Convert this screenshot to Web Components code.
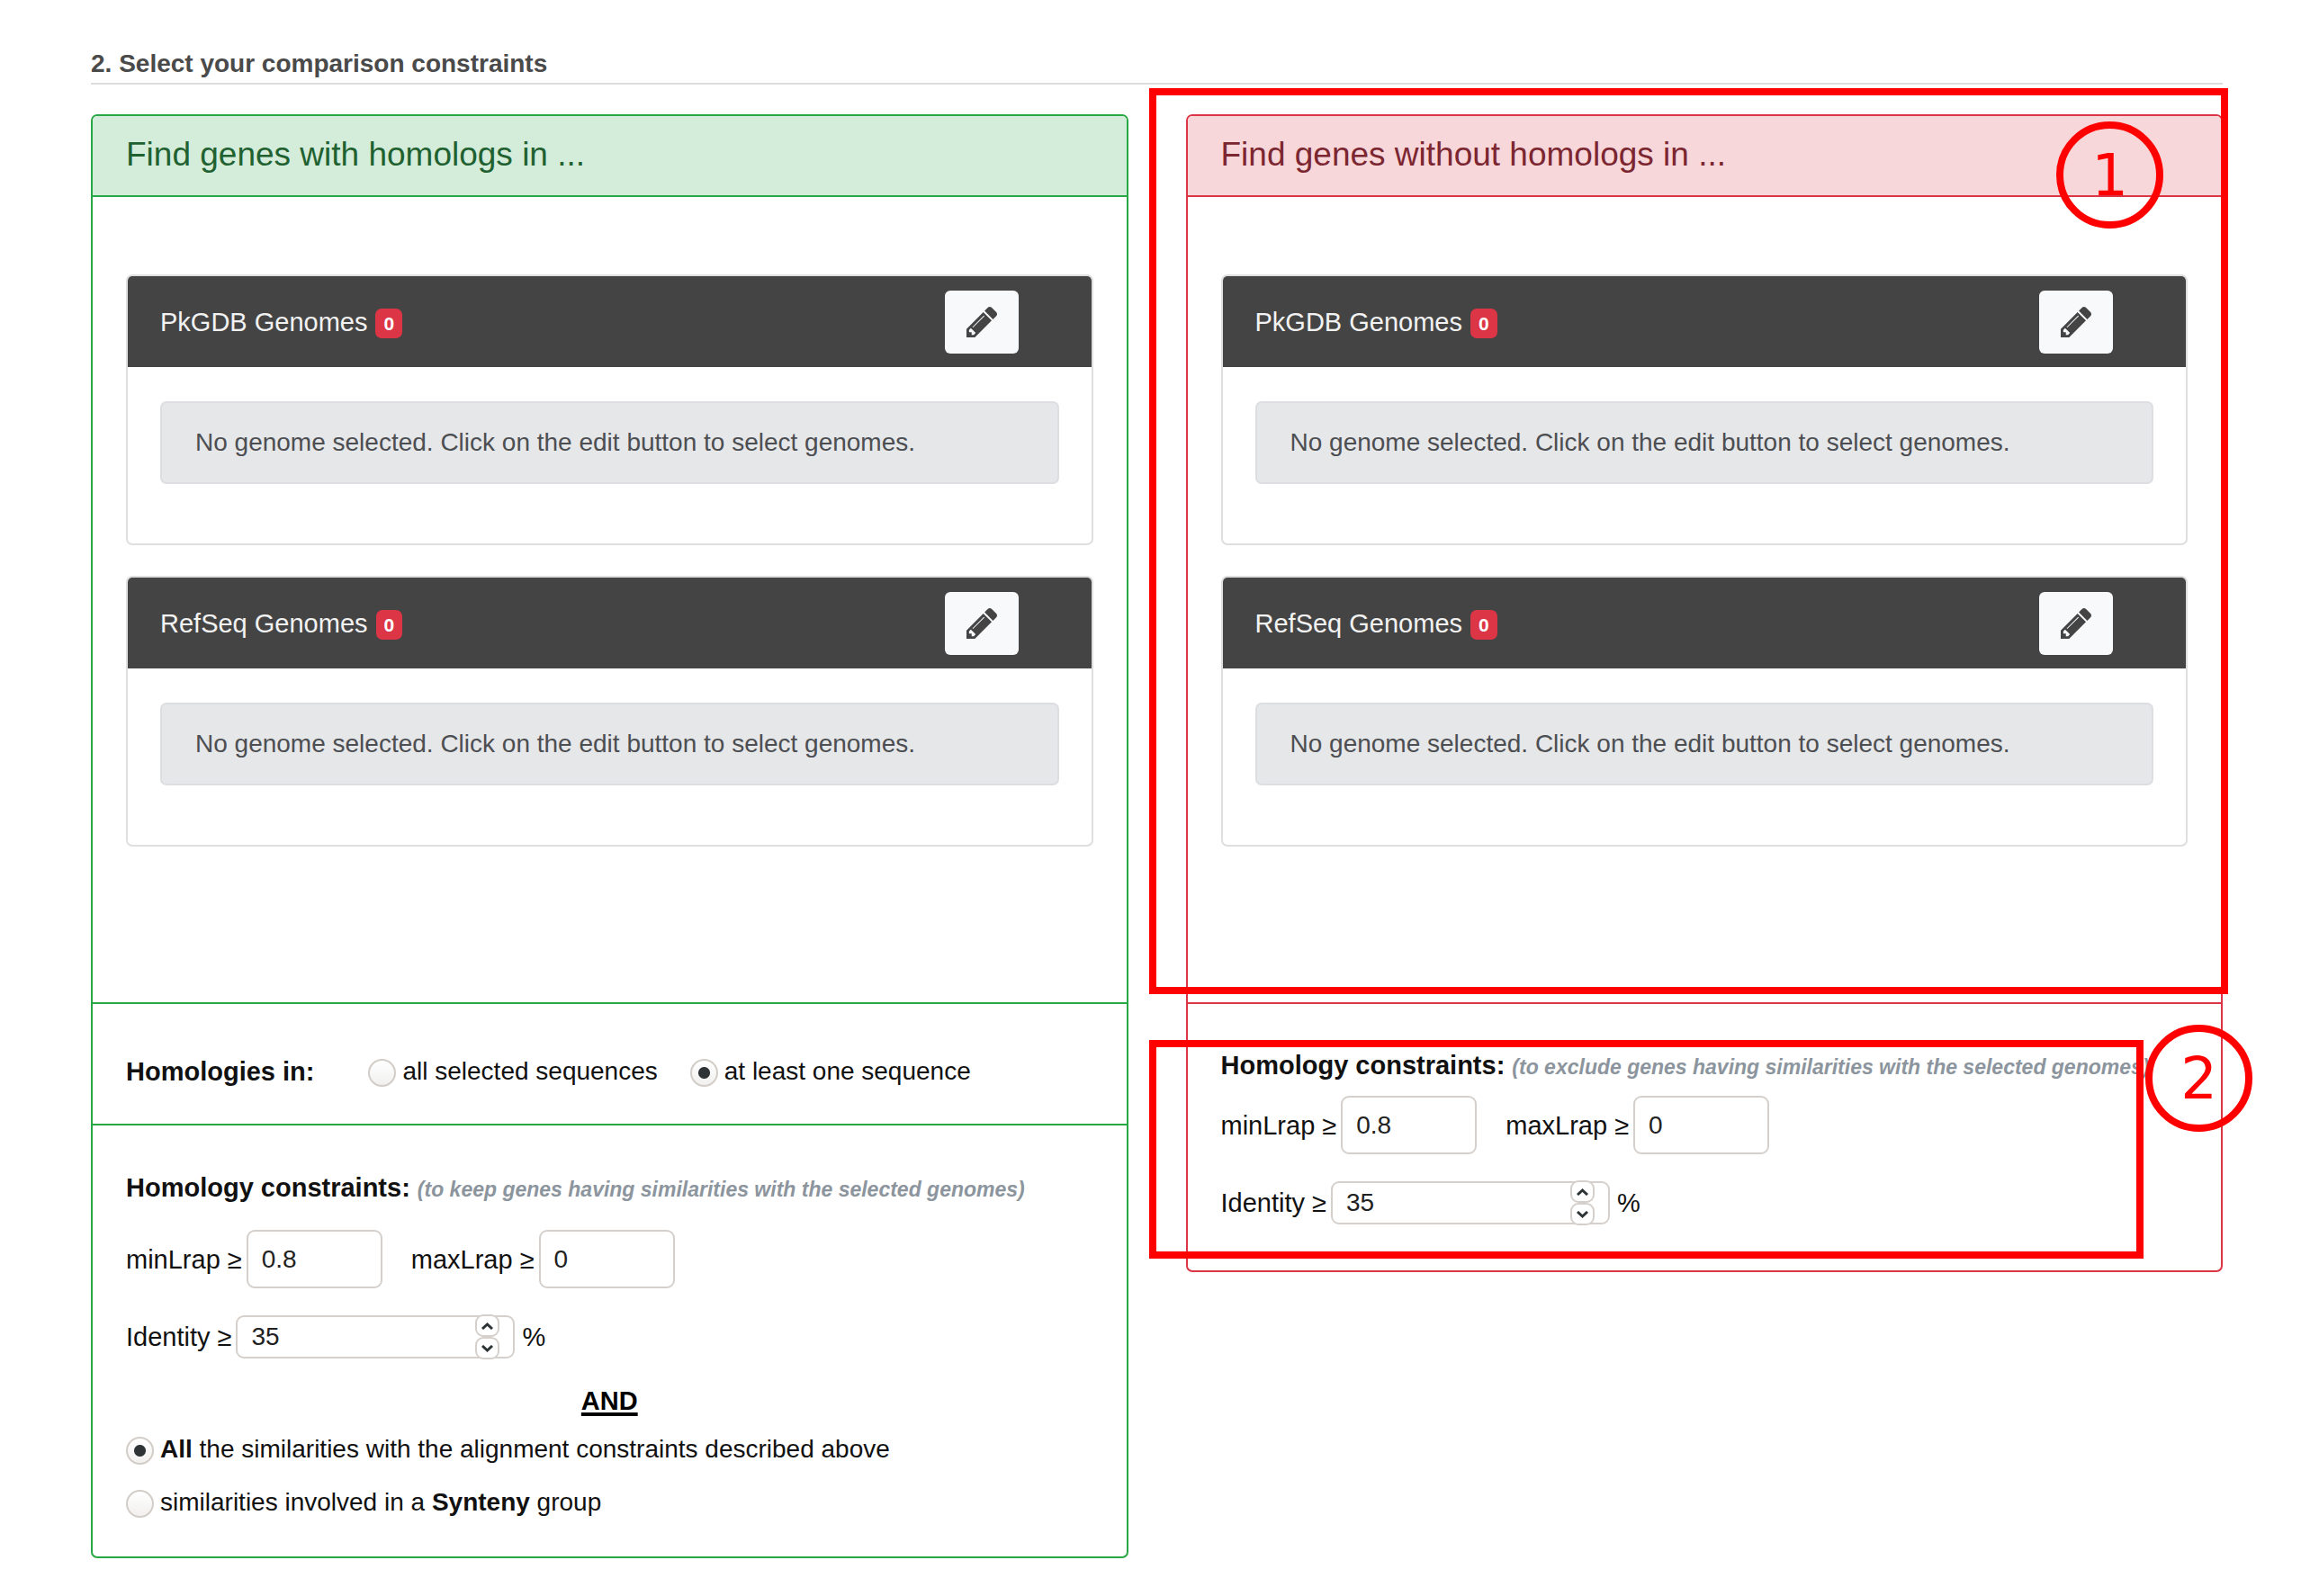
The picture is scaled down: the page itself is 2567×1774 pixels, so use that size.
<!DOCTYPE html>
<html lang="en">
<head>
<meta charset="utf-8">
<title>Comparison constraints</title>
<style>
  body { margin: 0; background: #fff; color: #111; font: 29px/40px "Liberation Sans", Arial, sans-serif; }
</style>
</head>
<body>
<comparison-page>
  <span slot="heading">2. Select your comparison constraints</span>

  <gene-panel tone="success">
    <span slot="title">Find genes with homologs in ...</span>
    <genome-card slot="genomes" count="0">PkGDB Genomes</genome-card>
    <genome-card slot="genomes" count="0">RefSeq Genomes</genome-card>
    <panel-section class="mode">
      <choice-group label="Homologies in:" name="mode" selected="1">
        <span>all selected sequences</span>
        <span>at least one sequence</span>
      </choice-group>
    </panel-section>
    <panel-section>
      <constraint-fields>
        <span slot="hint">(to keep genes having similarities with the selected genomes)</span>
      </constraint-fields>
      <and-divider>AND</and-divider>
      <choice-group stacked name="scope" selected="0">
        <span><b>All</b> the similarities with the alignment constraints described above</span>
        <span>similarities involved in a <b>Synteny</b> group</span>
      </choice-group>
    </panel-section>
  </gene-panel>

  <gene-panel tone="danger">
    <span slot="title">Find genes without homologs in ...</span>
    <genome-card slot="genomes" count="0">PkGDB Genomes</genome-card>
    <genome-card slot="genomes" count="0">RefSeq Genomes</genome-card>
    <panel-section class="last">
      <constraint-fields compact>
        <span slot="hint">(to exclude genes having similarities with the selected genomes)</span>
      </constraint-fields>
    </panel-section>
    <callout-frame slot="callouts" class="first">1</callout-frame>
    <callout-frame slot="callouts" class="second">2</callout-frame>
  </gene-panel>
</comparison-page>

<script>
class BaseElement extends HTMLElement {
  render(html) {
    if (!this.shadowRoot) this.attachShadow({ mode: 'open' });
    this.shadowRoot.innerHTML = '<style>*{box-sizing:border-box}</style>' + html;
  }
}

customElements.define('comparison-page', class extends BaseElement {
  connectedCallback() {
    this.render(`
      <style>
        :host { display: block; padding: 51px 97px 42px 101px; }
        h2 { margin: 0 0 33px; padding-bottom: 1px; font-size: 28px; line-height: 40px; color: #4a4a4a; border-bottom: 2px solid #dcdcdc; }
        .columns { display: grid; grid-template-columns: 1fr 1fr; gap: 64px; align-items: start; }
      </style>
      <h2><slot name="heading"></slot></h2>
      <div class="columns"><slot></slot></div>`);
  }
});

customElements.define('gene-panel', class extends BaseElement {
  connectedCallback() {
    this.render(`
      <style>
        :host { display: block; position: relative; --line: #28a745; --tint: #d4edda; --ink: #1f6130; }
        :host([tone="danger"]) { --line: #dc3545; --tint: #f8d7da; --ink: #7b2630; }
        .box { border: 2px solid var(--line); border-radius: 7px; overflow: hidden; }
        header { padding: 19px 37px 21px; background: var(--tint); color: var(--ink);
                 border-bottom: 2px solid var(--line); }
        h3 { margin: 0; font-size: 37px; font-weight: 400; line-height: 48px; }
        .genomes { display: flex; flex-direction: column; gap: 34px; padding: 86px 37px 173px; }
      </style>
      <section class="box">
        <header><h3><slot name="title"></slot></h3></header>
        <div class="genomes"><slot name="genomes"></slot></div>
        <slot></slot>
      </section>
      <slot name="callouts"></slot>`);
  }
});

customElements.define('genome-card', class extends BaseElement {
  connectedCallback() {
    this.render(`
      <style>
        :host { display: block; border: 2px solid #dfdfdf; border-radius: 7px; overflow: hidden; background: #fff; }
        header { display: flex; align-items: center; height: 101px; padding: 0 81px 0 36px;
                 background: #444; color: #f2f2f2; }
        .badge { margin: 3px auto 0 9px; padding: 0 9px; border-radius: 7px; background: #dc3545;
                 color: #fff; font-size: 21px; font-weight: 700; line-height: 33px; }
        button { display: grid; place-items: center; width: 82px; height: 70px; padding: 0;
                 border: 0; border-radius: 6px; background: #f8f9fa; color: #444; }
        svg { width: 34px; height: 34px; }
        .body { padding: 38px 36px 66px; }
        .alert { margin: 0; padding: 24px 37px; border: 2px solid #dcdee1; border-radius: 7px;
                 background: #e6e7e9; color: #4c4e52; font-size: 28px; }
      </style>
      <header>
        <slot></slot><span class="badge">${this.getAttribute('count')}</span>
        <button type="button" aria-label="Edit">
          <svg viewBox="128 149 1515 1515" fill="currentColor" aria-hidden="true"><path d="M491 1536l91-91-235-235-91 91v107h128v128h107zm523-928q0-22-22-22-10 0-17 7l-542 542q-7 7-7 17 0 22 22 22 10 0 17-7l542-542q7-7 7-17zm-54-192l416 416-832 832h-416v-416zm683 96q0 53-37 90l-166 166-416-416 166-165q36-38 90-38 53 0 91 38l235 234q37 39 37 91z"/></svg>
        </button>
      </header>
      <div class="body"><p class="alert">No genome selected. Click on the edit button to select genomes.</p></div>`);
  }
});

customElements.define('panel-section', class extends BaseElement {
  connectedCallback() {
    this.render(`
      <style>
        :host { display: block; padding: 49px 37px 40px; border-top: 2px solid var(--line); }
        :host(.mode) { padding: 55px 37px 38px; }
        :host(.last) { padding: 48px 37px 51px; }
      </style>
      <slot></slot>`);
  }
});

customElements.define('choice-group', class extends BaseElement {
  connectedCallback() {
    const name = this.getAttribute('name');
    const selected = Number(this.getAttribute('selected'));
    const label = this.getAttribute('label');
    const rows = [...this.children].map((child, i) => {
      child.slot = 'choice-' + i;
      return `<label><input type="radio" name="${name}" ${i === selected ? 'checked' : ''}><slot name="choice-${i}"></slot></label>`;
    }).join('');
    this.render(`
      <style>
        :host { display: flex; }
        .choices { display: flex; gap: 36px; }
        :host([stacked]) .choices { flex-direction: column; gap: 19px; }
        strong { margin-right: 60px; }
        label { display: flex; align-items: center; gap: 7px; font-size: 28px; }
        input { appearance: none; width: 31px; height: 31px; margin: 3px 0 0; border: 2px solid #d3cdc8;
                border-radius: 50%; background: linear-gradient(#fff, #f1f0ef); }
        input:checked { background: radial-gradient(circle, #2e3436 0 6px, transparent 7px), linear-gradient(#fff, #f1f0ef); }
      </style>
      ${label ? `<strong>${label}</strong>` : ''}
      <div class="choices" role="radiogroup">${rows}</div>`);
  }
});

customElements.define('constraint-fields', class extends BaseElement {
  connectedCallback() {
    this.render(`
      <style>
        :host { display: block; }
        .title { white-space: nowrap; margin: 0 0 25px; font-weight: 700; }
        :host([compact]) .title { margin-bottom: 12px; }
        em { font-size: 23px; color: #8c959d; }
        .row { display: flex; align-items: center; gap: 5px; }
        .row + .row { margin-top: 30px; }
        .gap { margin-left: 27px; }
        input { width: 151px; height: 65px; padding: 0 15px; border: 2px solid #d5d0cc; border-radius: 9px;
                background: #fff; color: #222; font: inherit; font-size: 28px; appearance: textfield; }
        input::-webkit-inner-spin-button { display: none; }
        .stepper { position: relative; display: flex; margin-right: 3px; }
        .stepper input { width: 310px; height: 48px; }
        .buttons { position: absolute; top: -1px; right: 17px; display: flex; flex-direction: column; }
        button { display: grid; place-items: center; width: 27px; height: 25px; padding: 0;
                 border: 2px solid #d5d0cc; border-radius: 9px; background: #fff; }
        svg { width: 13px; height: 8px; fill: none; stroke: #2e3436; stroke-width: 3; }
      </style>
      <p class="title">Homology constraints: <em><slot name="hint"></slot></em></p>
      <div class="row">
        <label for="min">minLrap ≥</label><input id="min" type="text" value="0.8">
        <label for="max" class="gap">maxLrap ≥</label><input id="max" type="text" value="0">
      </div>
      <div class="row">
        <label for="identity">Identity ≥</label>
        <span class="stepper">
          <input id="identity" type="number" value="35">
          <span class="buttons">
            <button type="button" aria-label="Increase"><svg viewBox="0 0 13 8"><path d="M1 7l5.500-5 5.500 5"/></svg></button>
            <button type="button" aria-label="Decrease"><svg viewBox="0 0 13 8"><path d="M1 1l5.500 5 5.500-5"/></svg></button>
          </span>
        </span>
        <span>%</span>
      </div>`);
    const identity = this.shadowRoot.getElementById('identity');
    const [up, down] = this.shadowRoot.querySelectorAll('button');
    up.onclick = () => identity.stepUp();
    down.onclick = () => identity.stepDown();
  }
});

customElements.define('and-divider', class extends BaseElement {
  connectedCallback() {
    this.render(`
      <style>
        :host { display: block; margin: 27px 0 14px; text-align: center; font-weight: 700; color: #000;
                text-decoration: underline; text-decoration-thickness: 4px; text-underline-offset: 3px; }
      </style>
      <slot></slot>`);
  }
});

customElements.define('callout-frame', class extends BaseElement {
  connectedCallback() {
    this.render(`
      <style>
        :host { position: absolute; left: -41px; border: 8px solid #f00; pointer-events: none; box-sizing: border-box; }
        :host(.first) { top: -29px; right: -6px; height: 1007px; }
        :host(.second) { top: 1029px; right: 88px; height: 243px; }
        .mark { position: absolute; display: grid; place-items: center; width: 119px; height: 119px;
                border: 8px solid #f00; border-radius: 50%; color: #f00;
                font: 64px/76px "DejaVu Sans", sans-serif; }
        :host(.first) .mark { top: 29px; right: 64px; }
        :host(.second) .mark { top: -25px; right: -129px; }
      </style>
      <span class="mark"><slot></slot></span>`);
  }
});
</script>
</body>
</html>
